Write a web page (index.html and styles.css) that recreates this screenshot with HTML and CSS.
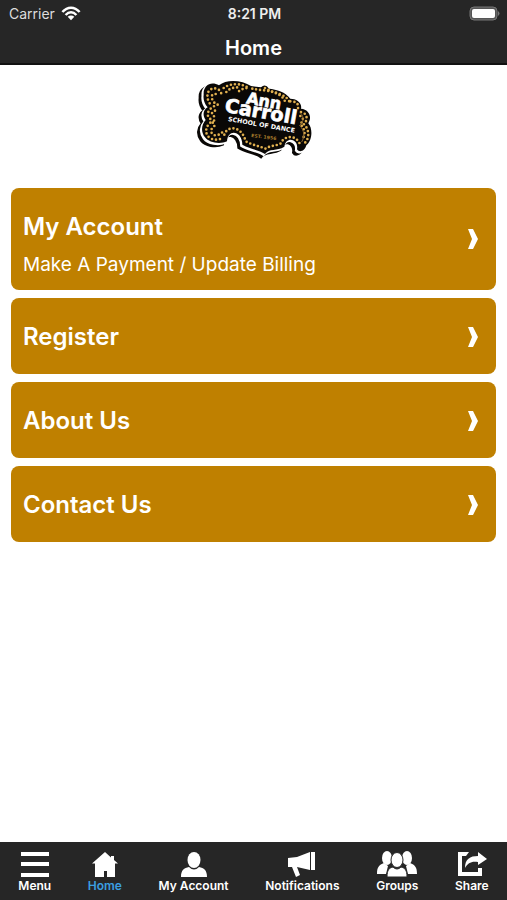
FILE: index.html
```html
<!DOCTYPE html>
<html lang="en">
<head>
<meta charset="utf-8">
<meta name="viewport" content="width=device-width, initial-scale=1">
<title>Home</title>
<link rel="stylesheet" href="styles.css">
</head>
<body>
<header class="top">
  <div class="status">
    <span class="carrier">Carrier
      <svg class="wifi" viewBox="0 0 20 15" aria-hidden="true"><g fill="none" stroke="#fff" stroke-width="2.5"><path d="M1.4 6C6.5 .3 13.500 .3 18.600 6"/><path d="M4.600 9C8 5.400 12 5.400 15.400 9"/></g><path d="M10 14.200L6.700 10.800C8.500 9.200 11.500 9.200 13.300 10.800Z" fill="#fff"/></svg>
    </span>
    <span class="time">8:21 PM</span>
    <svg class="battery" viewBox="0 0 31 16" aria-hidden="true"><rect x="1" y="1" width="27" height="13" rx="4" fill="#555" stroke="#777"/><rect x="3" y="3" width="23" height="9" rx="2" fill="#fff"/><path d="M29 5Q32 7.500 29 10Z" fill="#777"/></svg>
  </div>
  <h1 class="title">Home</h1>
</header>
<main class="content">
  <svg class="logo" viewBox="0 0 390 270" role="img" aria-label="Ann Carroll School of Dance">
    <defs>
      <path id="edge" d="M44 62C42 34 66 20 90 34C112 14 160 18 186 36L216 40Q229 28 240 44C262 46 290 54 304 74C322 74 340 86 336 104C360 106 370 128 358 148C372 164 370 200 352 214C346 234 330 236 324 226C330 196 292 184 286 218C264 232 240 222 228 240C212 228 184 226 160 212C160 170 116 162 114 202C92 212 60 206 48 190C34 172 38 152 50 138C40 124 42 108 56 100C46 88 42 76 44 62Z"/>
    </defs>
    <use href="#edge" x="-12" y="10" fill="#0a0806" stroke="#0a0806" stroke-width="6"/>
    <use href="#edge" x="-4" y="4" fill="#fff" stroke="#fff" stroke-width="5"/>
    <use href="#edge" fill="#0a0806"/>
    <g class="bulbs">
      <path d="M62 88C48 66 56 38 84 44C96 50 100 60 94 68"/>
      <path d="M76 86C64 72 66 58 80 60"/>
      <path d="M104 42C124 26 160 28 178 42C164 42 150 48 142 60"/>
      <path d="M112 54C124 40 144 38 156 42"/>
      <path d="M86 92C52 104 50 128 66 136C82 140 80 146 70 146"/>
      <path d="M78 110C66 112 66 124 78 128"/>
      <path d="M64 146C46 162 48 184 66 194C82 200 96 196 102 190"/>
      <path d="M76 156C62 166 64 180 78 184C92 184 98 176 106 170"/>
      <path d="M106 182C114 154 158 154 170 202C192 214 216 218 230 224C244 214 262 216 276 208C284 184 324 180 334 214"/>
      <path d="M190 44C216 50 250 48 276 62C294 68 300 80 306 92"/>
      <path d="M228 42L250 54C270 60 282 68 288 82"/>
      <path d="M304 82C328 82 330 96 326 106"/>
      <path d="M336 114C358 118 356 142 344 150C362 166 362 194 346 208"/>
      <path d="M334 126C346 130 342 142 334 150C350 168 350 184 338 198"/>
    </g>
    <path d="M334 116C348 132 342 146 332 154C346 170 348 186 338 204" fill="none" stroke="#8c6730" stroke-width="3"/>
    <g class="sign-text">
      <g class="heavy">
        <text transform="translate(170 88) rotate(10)" font-size="48">Ann</text>
        <text transform="translate(105 113) rotate(10)" font-size="58">Carroll</text>
      </g>
      <text transform="translate(116 141) rotate(10)" font-size="19">SCHOOL OF DANCE</text>
      <text class="est" transform="translate(186 189) rotate(7)" font-size="14">EST. 1956</text>
    </g>
  </svg>
  <nav class="cards" aria-label="Sections">
    <a class="card detailed" href="#account"><span class="label"><strong>My Account</strong><span class="sub">Make A Payment / Update Billing</span></span><svg class="chevron" viewBox="0 0 10 20" aria-hidden="true"><path d="M0 0H5L10 10L5 20H0L4 10Z"/></svg></a>
    <a class="card" href="#register"><span class="label"><strong>Register</strong></span><svg class="chevron" viewBox="0 0 10 20" aria-hidden="true"><path d="M0 0H5L10 10L5 20H0L4 10Z"/></svg></a>
    <a class="card" href="#about"><span class="label"><strong>About Us</strong></span><svg class="chevron" viewBox="0 0 10 20" aria-hidden="true"><path d="M0 0H5L10 10L5 20H0L4 10Z"/></svg></a>
    <a class="card" href="#contact"><span class="label"><strong>Contact Us</strong></span><svg class="chevron" viewBox="0 0 10 20" aria-hidden="true"><path d="M0 0H5L10 10L5 20H0L4 10Z"/></svg></a>
  </nav>
</main>
<nav class="tabs" aria-label="Main">
  <a class="tab" href="#menu"><svg viewBox="0 0 40 28" aria-hidden="true"><path d="M6 2h28v4H6zM6 12h28v4H6zM6 23h28v4H6z"/></svg>Menu</a>
  <a class="tab active" href="#home" aria-current="page"><svg viewBox="0 0 40 28" aria-hidden="true"><path d="M20 2L26 7.500V6H29V10L33 13.500H30V27H22V21H19V27H10V13.500H7Z"/></svg>Home</a>
  <a class="tab" href="#my-account"><svg viewBox="0 0 40 28" aria-hidden="true"><ellipse cx="20" cy="10" rx="6.500" ry="8"/><path d="M7 27C7 20 10 18 15 17Q20 22 25 17C30 18 33 20 33 27Z"/></svg>My Account</a>
  <a class="tab" href="#notifications"><svg viewBox="0 0 40 28" aria-hidden="true"><path d="M6 8L15 7L28 2V20L15 17L18 25L14 27L10 17H6ZM29 2H33V20H29Z"/></svg>Notifications</a>
  <a class="tab" href="#groups"><svg viewBox="0 0 40 28" aria-hidden="true"><ellipse cx="10" cy="8" rx="5" ry="7"/><ellipse cx="30" cy="8" rx="5" ry="7"/><path d="M0 24C0 17 2 15 7 13L11 16L9 24ZM40 24C40 17 38 15 33 13L29 16L31 24Z"/><path d="M10 27C10 20 12 18 16 17Q20 21 24 17C28 18 30 20 30 27Z" stroke="#262626"/><ellipse cx="20" cy="10" rx="6" ry="7.500" stroke="#262626"/></svg>Groups</a>
  <a class="tab" href="#share"><svg viewBox="0 0 40 28" aria-hidden="true"><path d="M17 2H6V26H30V18H26V22H10V6H14ZM13 18C13 9 18 6 26 6V2L35 9L26 15V12C19 11 16 13 13 18Z"/></svg>Share</a>
</nav>
</body>
</html>
```
FILE: styles.css
```css
*{box-sizing:border-box}
body{margin:0;min-height:100vh;display:flex;flex-direction:column;background:#fff;font-family:Inter,"Liberation Sans",sans-serif;color:#fff}
a{color:inherit;text-decoration:none}
.top{background:#262626;border-bottom:2px solid #111}
.status{display:grid;grid-template-columns:1fr auto 1fr;align-items:center;height:27px;padding:0 7px 0 9px}
.carrier{display:flex;align-items:center;gap:6px;font-size:14px;color:#ddd}
.wifi{width:20px;height:15px}
.time{font-size:14px;font-weight:600;color:#eee}
.battery{width:31px;height:16px;justify-self:end}
.title{margin:0;padding-top:6px;text-align:center;font-size:20px;line-height:30px;font-weight:600}
.content{flex:1;padding:9px 11px}
.logo{display:block;width:130px;height:90px;margin:0 auto}
.bulbs{fill:none;stroke:#e0b050;stroke-width:8;stroke-linecap:round;stroke-dasharray:0 12}
.sign-text{fill:#fff;font-family:"DejaVu Sans",sans-serif;font-weight:700}
.heavy{stroke:#fff;stroke-width:2}
.est{fill:#a87b2c}
.cards{display:flex;flex-direction:column;gap:8px;margin-top:24px}
.card{display:flex;align-items:center;justify-content:space-between;background:#bf8000;border-radius:8px;min-height:76px;padding:13px 18px 12px 12px}
.detailed{min-height:102px;padding-top:24px;padding-bottom:10px}
.detailed .chevron{align-self:flex-start;margin-top:17px}
.label{display:flex;flex-direction:column;line-height:30px}
.label strong{font-size:24px;font-weight:600}
.sub{font-size:19px;margin-top:8px}
.chevron{width:10px;height:20px;fill:#fff}
.tabs{display:flex;justify-content:space-around;background:#262626;height:58px;padding-top:8px}
.tab{display:flex;flex-direction:column;align-items:center;font-size:12px;line-height:16px;font-weight:600}
.tab svg{width:40px;height:28px;margin:0 -4px;fill:#fff}
.active{color:#3b9fe0}
```
